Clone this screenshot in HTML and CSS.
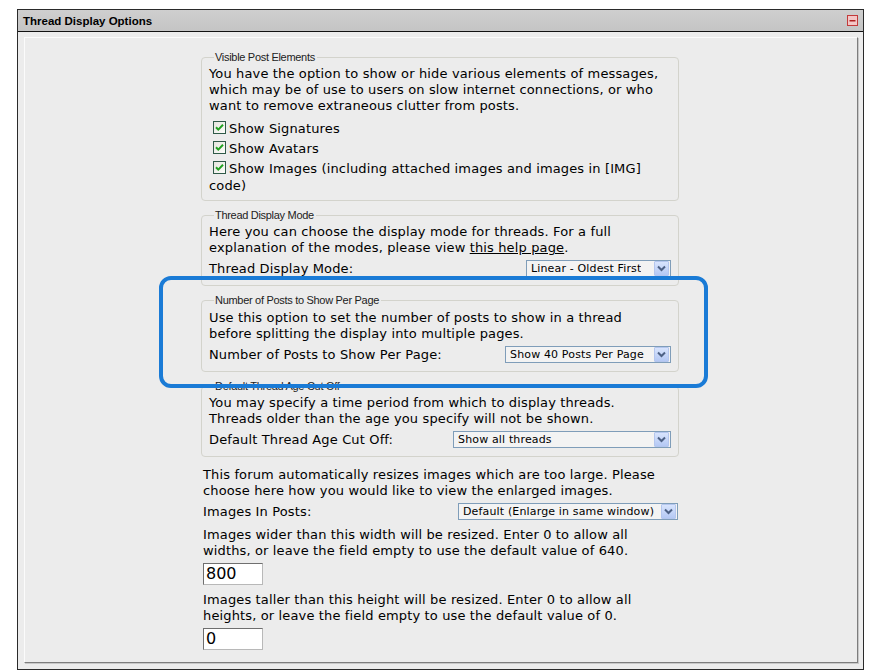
FILE: index.html
```html
<!DOCTYPE html>
<html>
<head>
<meta charset="utf-8">
<link rel="stylesheet" href="styles.css">
</head>
<body>
<div class="box">
  <div class="head">
    <span class="title">Thread Display Options</span>
    <span class="collapse"><svg width="11" height="11" viewBox="0 0 11 11"><rect x="0.5" y="0.5" width="10" height="10" fill="#f3c6c6" stroke="#c23a3a"/><rect x="2.5" y="5" width="6" height="1.5" fill="#b02020"/></svg></span>
  </div>
  <div class="body">
    <div class="panel">
      <div class="content">
        <fieldset class="fs f1">
          <legend>Visible Post Elements</legend>
          <div class="txt">You have the option to show or hide various elements of messages, which may be of use to users on slow internet connections, or who want to remove extraneous clutter from posts.</div>
          <div class="checks">
            <div class="crow"><span class="cb"><svg width="11" height="11" viewBox="0 0 11 11"><path d="M2 5.2 L4.3 7.6 L9 2.8" fill="none" stroke="#21a121" stroke-width="2"/></svg></span>Show Signatures</div>
            <div class="crow"><span class="cb"><svg width="11" height="11" viewBox="0 0 11 11"><path d="M2 5.2 L4.3 7.6 L9 2.8" fill="none" stroke="#21a121" stroke-width="2"/></svg></span>Show Avatars</div>
            <div class="crow"><span class="cb"><svg width="11" height="11" viewBox="0 0 11 11"><path d="M2 5.2 L4.3 7.6 L9 2.8" fill="none" stroke="#21a121" stroke-width="2"/></svg></span>Show Images (including attached images and images in [IMG] code)</div>
          </div>
        </fieldset>

        <fieldset class="fs">
          <legend>Thread Display Mode</legend>
          <div class="txt">Here you can choose the display mode for threads. For a full explanation of the modes, please view <a class="lnk" href="#">this help page</a>.</div>
          <div class="row">
            <span>Thread Display Mode:</span>
            <span class="sel w1"><span class="sv">Linear - Oldest First</span><span class="arr"><svg width="9" height="7" viewBox="0 0 9 7"><path d="M1 1.5 L4.5 5 L8 1.5" fill="none" stroke="#4d6185" stroke-width="2"/></svg></span></span>
          </div>
        </fieldset>

        <fieldset class="fs f3">
          <legend>Number of Posts to Show Per Page</legend>
          <div class="txt">Use this option to set the number of posts to show in a thread before splitting the display into multiple pages.</div>
          <div class="row">
            <span>Number of Posts to Show Per Page:</span>
            <span class="sel w2"><span class="sv">Show 40 Posts Per Page</span><span class="arr"><svg width="9" height="7" viewBox="0 0 9 7"><path d="M1 1.5 L4.5 5 L8 1.5" fill="none" stroke="#4d6185" stroke-width="2"/></svg></span></span>
          </div>
        </fieldset>

        <fieldset class="fs">
          <legend>Default Thread Age Cut Off</legend>
          <div class="txt">You may specify a time period from which to display threads. Threads older than the age you specify will not be shown.</div>
          <div class="row">
            <span>Default Thread Age Cut Off:</span>
            <span class="sel w3"><span class="sv">Show all threads</span><span class="arr"><svg width="9" height="7" viewBox="0 0 9 7"><path d="M1 1.5 L4.5 5 L8 1.5" fill="none" stroke="#4d6185" stroke-width="2"/></svg></span></span>
          </div>
        </fieldset>

        <div class="plain">
          <div class="txt t1">This forum automatically resizes images which are too large. Please choose here how you would like to view the enlarged images.</div>
          <div class="row">
            <span>Images In Posts:</span>
            <span class="sel w4"><span class="sv">Default (Enlarge in same window)</span><span class="arr"><svg width="9" height="7" viewBox="0 0 9 7"><path d="M1 1.5 L4.5 5 L8 1.5" fill="none" stroke="#4d6185" stroke-width="2"/></svg></span></span>
          </div>
          <div class="txt t2">Images wider than this width will be resized. Enter 0 to allow all widths, or leave the field empty to use the default value of 640.</div>
          <div class="inp">800</div>
          <div class="txt t2">Images taller than this height will be resized. Enter 0 to allow all heights, or leave the field empty to use the default value of 0.</div>
          <div class="inp">0</div>
        </div>
      </div>
    </div>
  </div>
</div>
<div class="highlight"></div>
</body>
</html>
```
FILE: styles.css
```css
html, body {
  margin: 0;
  padding: 0;
  background: #fff;
}
body {
  font-family: "DejaVu Sans", Verdana, sans-serif;
  font-size: 13px;
  letter-spacing: 0.14px;
  color: #000;
}
.box {
  margin: 9px 0 0 17px;
  width: 845px;
  border: 1px solid #2a2a2a;
}
.head {
  height: 21px;
  background: linear-gradient(#cfcfcf, #c4c4c4);
  border-bottom: 1px solid #111;
  display: flex;
  align-items: center;
  justify-content: space-between;
  padding: 0 4px 0 5px;
}
.title {
  font-family: "Liberation Sans", Arial, sans-serif;
  font-weight: bold;
  font-size: 11.5px;
  letter-spacing: 0;
  color: #000;
}
.collapse {
  display: flex;
  margin-right: 1px;
}
.body {
  background: #ececec;
  padding: 5px 5px 6px 6px;
}
.panel {
  border: 1px solid;
  border-color: #fbfbfb #7d7d7d #7d7d7d #fbfbfb;
  box-shadow: 1px 1px 0 #c8c8c8;
  height: 624px;
  background: #ececec;
}
.content {
  width: 478px;
  margin-left: 176px;
  padding-top: 13px;
}
.fs {
  margin: 0 0 8px 0;
  padding: 2px 7px 8px 7px;
  border: 1px solid #d3d3cc;
  border-radius: 4px;
  min-width: 0;
}
.fs .txt { padding-right: 8px; }
.f1 { padding-bottom: 5px; }
.f3 { padding-top: 3px; }
.fs legend {
  font-family: "Liberation Sans", Arial, sans-serif;
  font-size: 11px;
  line-height: 13px;
  letter-spacing: -0.3px;
  color: #222;
  padding: 0 2px 0 1px;
  margin-left: 5px;
}
.txt {
  line-height: 16px;
}
.lnk {
  color: #000;
  text-decoration: underline;
}
.checks {
  margin-top: 4px;
}
.crow {
  line-height: 17px;
  padding: 2px 0 1px 0;
}
.cb {
  display: inline-block;
  width: 11px;
  height: 11px;
  border: 1px solid #2f5a48;
  background: linear-gradient(135deg, #e4e4de, #fdfdfb);
  vertical-align: -1px;
  margin: 0 3px 0 4px;
}
.cb svg {
  display: block;
}
.row {
  display: flex;
  justify-content: space-between;
  align-items: center;
  margin-top: 4px;
  line-height: 16px;
}
.sel {
  display: flex;
  align-items: center;
  justify-content: space-between;
  height: 15px;
  border: 1px solid #7f9db9;
  background: #f3f3f3;
  font-size: 11px;
  letter-spacing: 0.15px;
  line-height: 15px;
  padding-left: 4px;
  box-sizing: content-box;
}
.sv { white-space: nowrap; overflow: hidden; }
.arr {
  width: 13px;
  height: 13px;
  margin: 0 1px 0 2px;
  border: 1px solid #b4c6ee;
  border-radius: 1px;
  background: linear-gradient(#d8e4fd, #b4c8f4);
  display: flex;
  align-items: center;
  justify-content: center;
  flex: none;
}
.w1 { width: 139px; }
.w2 { width: 160px; }
.w3 { width: 212px; }
.w4 { width: 214px; }
.plain {
  padding: 0 1px 0 2px;
}
.t1 { margin-top: 10px; }
.t2 { margin-top: 7px; }
.inp {
  margin-top: 4px;
  width: 56px;
  height: 20px;
  border: 1px solid;
  border-color: #6f6f6f #b8b8b8 #b8b8b8 #6f6f6f;
  background: #fff;
  font-size: 16px;
  letter-spacing: 0;
  line-height: 20px;
  padding-left: 2px;
}
.highlight {
  position: absolute;
  left: 159px;
  top: 276px;
  width: 541px;
  height: 104px;
  border: 4px solid #1a7bd6;
  border-radius: 12px;
}
```
